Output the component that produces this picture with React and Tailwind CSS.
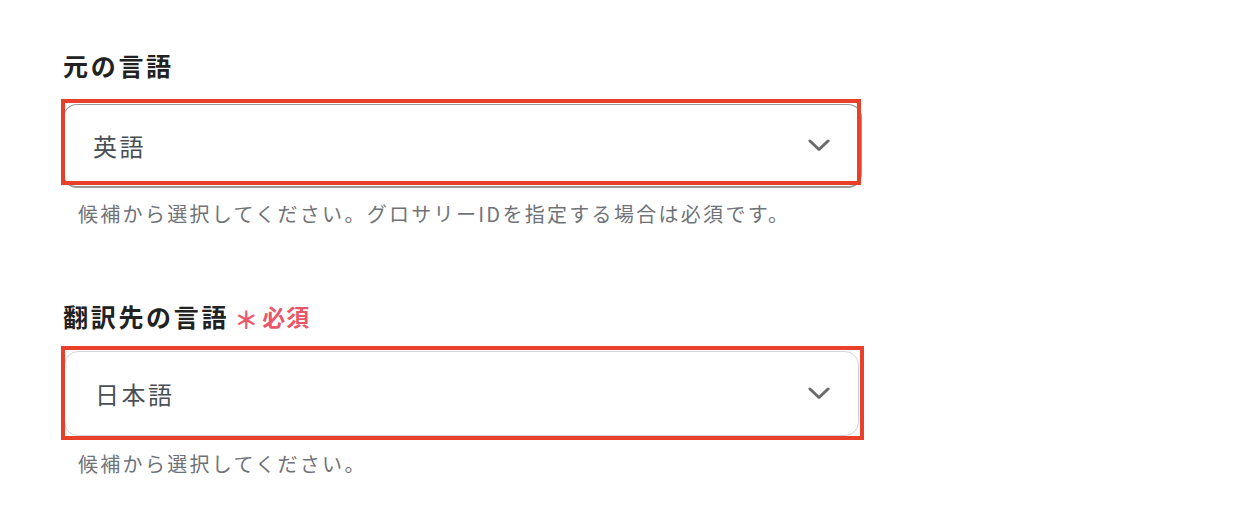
export default function App() {
  const font = { fontFamily: '"Noto Sans CJK JP", "Noto Sans", sans-serif' };
  const Chevron = () => (
    <svg width="22" height="13" viewBox="0 0 22 13" className="shrink-0">
      <path d="M2 2 L11 10.5 L20 2" fill="none" stroke="#6b6b6b" strokeWidth="3" strokeLinecap="round" strokeLinejoin="round" />
    </svg>
  );
  return (
    <div className="w-[1246px] h-[526px] bg-white overflow-hidden pl-[63px] pt-[49px]" style={font}>
      <h2 className="text-[25px] leading-[32px] font-bold text-[#222222] tracking-[2.7px]">元の言語</h2>
      <div className="relative mt-[23px] w-[799px]">
        <div className="h-[84px] rounded-[14px] border border-[#9a9a9a] border-b-2 bg-white flex items-center justify-between pl-[29px] pr-[31px]">
          <span className="text-[24px] text-[#4a4f56] tracking-[2.5px]">英語</span>
          <Chevron />
        </div>
        <div className="absolute left-[-2px] top-[-5px] w-[800px] h-[86px] border-4 border-[#e8402a] pointer-events-none" />
      </div>
      <p className="mt-[13px] ml-[15px] text-[20px] leading-[26px] text-[#6f7378] tracking-[2.3px]">
        候補から選択してください。グロサリーIDを指定する場合は必須です。
      </p>

      <h2 className="mt-[73px] text-[25px] leading-[32px] font-bold text-[#222222] tracking-[2.7px] flex items-center">
        <span>翻訳先の言語</span>
        <span className="ml-[5px] text-[#e8586a] text-[24px] leading-[32px] font-bold translate-y-[3px] tracking-normal">＊</span>
        <span className="ml-[4px] text-[#e8586a] text-[23px] tracking-[1px]">必須</span>
      </h2>
      <div className="relative mt-[19px] w-[795px] ml-px">
        <div className="h-[85px] rounded-[14px] border border-[#d1d5db] bg-white flex items-center justify-between pl-[30px] pr-[28px]">
          <span className="text-[24px] text-[#4a4f56] tracking-[2.5px]">日本語</span>
          <Chevron />
        </div>
        <div className="absolute left-[-3px] top-[-5px] w-[803px] h-[94px] border-4 border-[#e8402a] pointer-events-none" />
      </div>
      <p className="mt-[15px] ml-[15px] text-[20px] leading-[26px] text-[#6f7378] tracking-[2.3px]">
        候補から選択してください。
      </p>
    </div>
  );
}
